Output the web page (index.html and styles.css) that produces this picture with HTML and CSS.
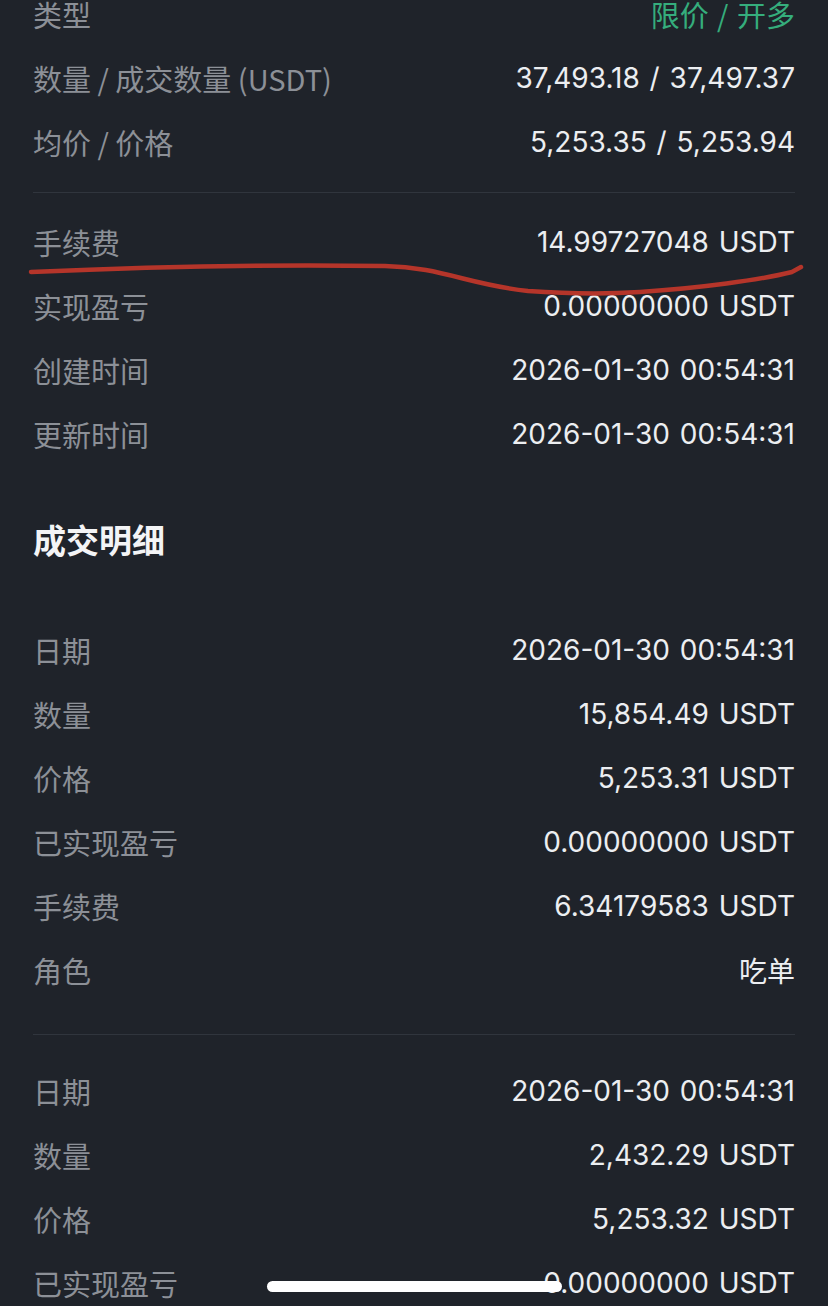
FILE: index.html
```html
<!DOCTYPE html>
<html lang="zh-CN">

<head>
  <meta charset="UTF-8">
  <meta name="viewport" content="width=device-width, initial-scale=1.0">
  <title>订单详情</title>

  <link rel="stylesheet" href="styles.css">
</head>

<body>
  <div class="page">
    <div class="group first">
      <div class="row"><span class="label">类型</span><span class="value green">限价 / 开多</span></div>
      <div class="row"><span class="label">数量 / 成交数量 (USDT)</span><span class="value">37,493.18 / 37,497.37</span></div>
      <div class="row"><span class="label">均价 / 价格</span><span class="value">5,253.35 / 5,253.94</span></div>
    </div>
    <div class="divider"></div>
    <div class="group second">
      <div class="row"><span class="label">手续费</span><span class="value">14.99727048 USDT</span></div>
      <div class="row"><span class="label">实现盈亏</span><span class="value">0.00000000 USDT</span></div>
      <div class="row"><span class="label">创建时间</span><span class="value">2026-01-30 00:54:31</span></div>
      <div class="row"><span class="label">更新时间</span><span class="value">2026-01-30 00:54:31</span></div>
    </div>

    <h2 class="title">成交明细</h2>

    <div class="group">
      <div class="row"><span class="label">日期</span><span class="value">2026-01-30 00:54:31</span></div>
      <div class="row"><span class="label">数量</span><span class="value">15,854.49 USDT</span></div>
      <div class="row"><span class="label">价格</span><span class="value">5,253.31 USDT</span></div>
      <div class="row"><span class="label">已实现盈亏</span><span class="value">0.00000000 USDT</span></div>
      <div class="row"><span class="label">手续费</span><span class="value">6.34179583 USDT</span></div>
      <div class="row"><span class="label">角色</span><span class="value">吃单</span></div>
    </div>
    <div class="divider lower"></div>
    <div class="group">
      <div class="row"><span class="label">日期</span><span class="value">2026-01-30 00:54:31</span></div>
      <div class="row"><span class="label">数量</span><span class="value">2,432.29 USDT</span></div>
      <div class="row"><span class="label">价格</span><span class="value">5,253.32 USDT</span></div>
      <div class="row"><span class="label">已实现盈亏</span><span class="value">0.00000000 USDT</span></div>
    </div>
  </div>

  <!-- красная линия от руки поверх строки "手续费" -->
  <svg class="scribble" width="828" height="44" viewBox="0 0 828 44">
    <path d="M31 18 C 120 14, 260 10, 385 12 C 440 13, 470 31, 528 37 C 570 40, 610 40, 640 38 C 700 34, 760 26, 792 18 L 801 13"
      fill="none" stroke="#b5352a" stroke-width="4.5" stroke-linecap="round" />
  </svg>

  <div class="home-bar"></div>
</body>

</html>
```

FILE: styles.css
```css
html,
body {
  margin: 0;
  padding: 0;
  background-color: #1f232a;
  height: 1306px;
  overflow: hidden;
}

body {
  position: relative;
  font-family: Inter, "Noto Sans CJK SC", sans-serif;
  -webkit-font-smoothing: antialiased;
}

.page {
  padding: 0 33px;
}

.group.first {
  margin-top: -18px;
}

.row {
  display: flex;
  justify-content: space-between;
  align-items: center;
  height: 64px;
  font-size: 28px;
}

.label {
  color: #8c9097;
  font-family: "Noto Sans CJK SC", sans-serif;
  font-size: 29px;
}

.value {
  color: #eceef1;
  word-spacing: 2px;
}

.value.green {
  color: #35ad7c;
  font-family: "Noto Sans CJK SC", sans-serif;
  font-size: 29px;
}

.divider {
  height: 1px;
  background-color: #30353d;
  margin: 18px 0 17px;
}

.divider.lower {
  margin: 32px 0 24px;
}

.title {
  margin: 53px 0 59px;
  height: 40px;
  line-height: 40px;
  font-size: 33px;
  font-weight: 700;
  color: #f3f4f6;
  font-family: "Noto Sans CJK SC", sans-serif;
}

.scribble {
  position: absolute;
  left: 0;
  top: 254px;
}

.home-bar {
  position: absolute;
  left: 267px;
  top: 1281px;
  width: 295px;
  height: 11px;
  border-radius: 6px;
  background-color: #ffffff;
}
```
